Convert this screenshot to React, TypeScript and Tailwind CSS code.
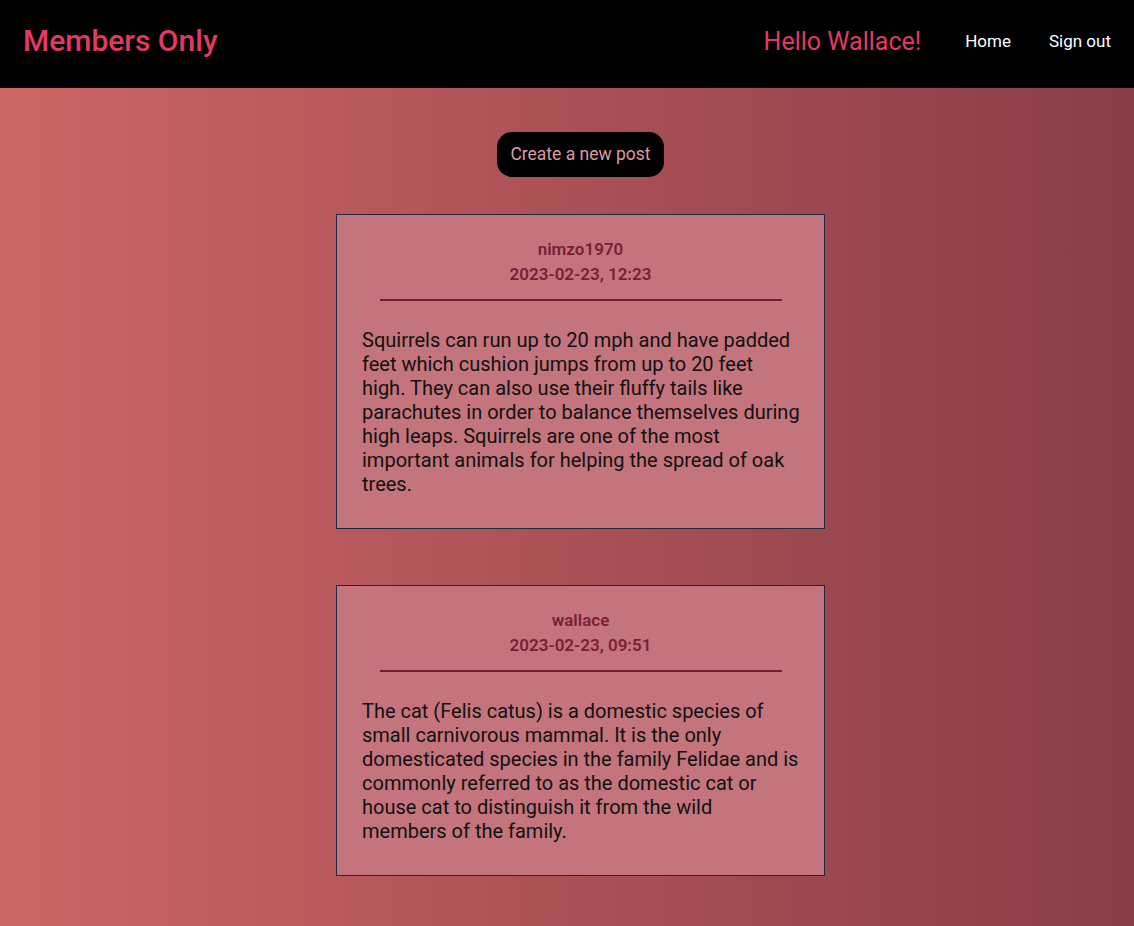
const posts = [
  {
    author: "nimzo1970",
    date: "2023-02-23, 12:23",
    body: "Squirrels can run up to 20 mph and have padded feet which cushion jumps from up to 20 feet high. They can also use their fluffy tails like parachutes in order to balance themselves during high leaps. Squirrels are one of the most important animals for helping the spread of oak trees.",
  },
  {
    author: "wallace",
    date: "2023-02-23, 09:51",
    body: "The cat (Felis catus) is a domestic species of small carnivorous mammal. It is the only domesticated species in the family Felidae and is commonly referred to as the domestic cat or house cat to distinguish it from the wild members of the family.",
  },
];

function PostCard({ author, date, body }: { author: string; date: string; body: string }) {
  return (
    <div className="w-[489px] bg-[#c4747c] border border-[#182c3e] pt-[22px] px-[25px] pb-[32px]">
      <div className="text-center text-[17px] leading-[25px] font-semibold text-[#7a1f38]">{author}</div>
      <div className="text-center text-[17px] leading-[25px] font-semibold text-[#7a1f38]">{date}</div>
      <div className="mx-auto mt-[12px] w-[402px] h-[2px] bg-[#731c32]" />
      <p className="mt-[27px] w-[438.4px] text-[20px] leading-[24px] text-[#111]">{body}</p>
    </div>
  );
}

export default function App() {
  return (
    <div className="min-h-[926px] flex flex-col font-['Roboto',sans-serif] bg-gradient-to-r from-[#cc6666] to-[#8a3d47]">
      <header className="h-[88px] bg-black flex items-center px-[23px]">
        <h1 className="mb-[8px] text-[30px] font-medium text-[#e23a62]">Members Only</h1>
        <div className="ml-auto mb-[4px] flex items-center">
          <span className="text-[25px] text-[#e23a62]">Hello Wallace!</span>
          <a href="#" className="ml-[44px] text-[17px] text-white">Home</a>
          <a href="#" className="ml-[38px] text-[17px] text-white">Sign out</a>
        </div>
      </header>

      <main className="flex flex-col items-center pl-[27px] pt-[44px] pb-[51px]">
        <button className="h-[45px] px-[13px] rounded-[15px] bg-black text-[17.5px] text-[#dc9ca6]">
          Create a new post
        </button>
        <div className="mt-[37px] flex flex-col gap-[56px]">
          {posts.map((p) => (
            <PostCard key={p.author} {...p} />
          ))}
        </div>
      </main>
    </div>
  );
}
